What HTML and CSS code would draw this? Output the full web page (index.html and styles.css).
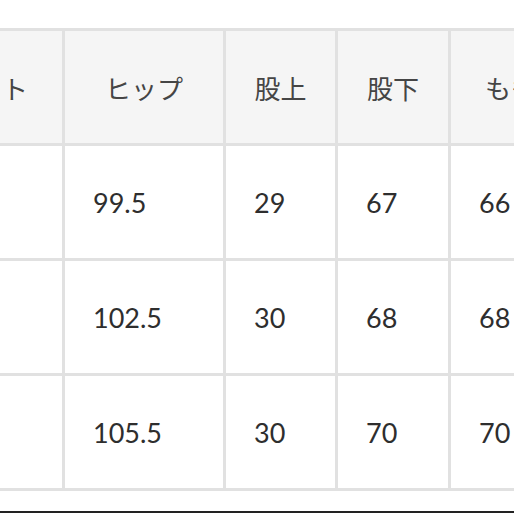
FILE: index.html
```html
<!DOCTYPE html>
<html lang="ja">
<head>
<meta charset="utf-8">
<link rel="stylesheet" href="styles.css">
</head>
<body>
<div class="page">
  <div class="table">
    <div class="cell head">ウエスト</div>
    <div class="cell head">ヒップ</div>
    <div class="cell head">股上</div>
    <div class="cell head">股下</div>
    <div class="cell head">もも</div>

    <div class="cell">70</div>
    <div class="cell">99.5</div>
    <div class="cell">29</div>
    <div class="cell">67</div>
    <div class="cell">66</div>

    <div class="cell">73</div>
    <div class="cell">102.5</div>
    <div class="cell">30</div>
    <div class="cell">68</div>
    <div class="cell">68</div>

    <div class="cell">76</div>
    <div class="cell">105.5</div>
    <div class="cell">30</div>
    <div class="cell">70</div>
    <div class="cell">70</div>
  </div>
  <div class="rule"></div>
</div>
</body>
</html>
```

FILE: styles.css
```css
html, body {
  margin: 0;
  padding: 0;
  overflow: hidden;
  background: #ffffff;
}

.page {
  width: 514px;
  height: 514px;
  overflow: hidden;
  padding-top: 28px;
  box-sizing: border-box;
  display: flex;
  flex-direction: column;
}

.table {
  display: grid;
  grid-template-columns: 172px 158px 109px 110px 120px;
  grid-auto-rows: 112px;
  gap: 3px;
  padding: 3px 0;
  background: #e1e1e1;
  margin-left: -110px;
  width: max-content;
  font-family: Lato, "Noto Sans CJK JP", sans-serif;
  font-size: 27px;
}

.cell {
  background: #ffffff;
  color: #2e2e2e;
  display: flex;
  align-items: center;
  padding-left: 28px;
}

.head {
  background: #f5f5f5;
  color: #454545;
  font-size: 26px;
  justify-content: center;
  padding-left: 0;
}

.rule {
  margin-top: 20px;
  height: 2px;
  background: #222222;
}
```
